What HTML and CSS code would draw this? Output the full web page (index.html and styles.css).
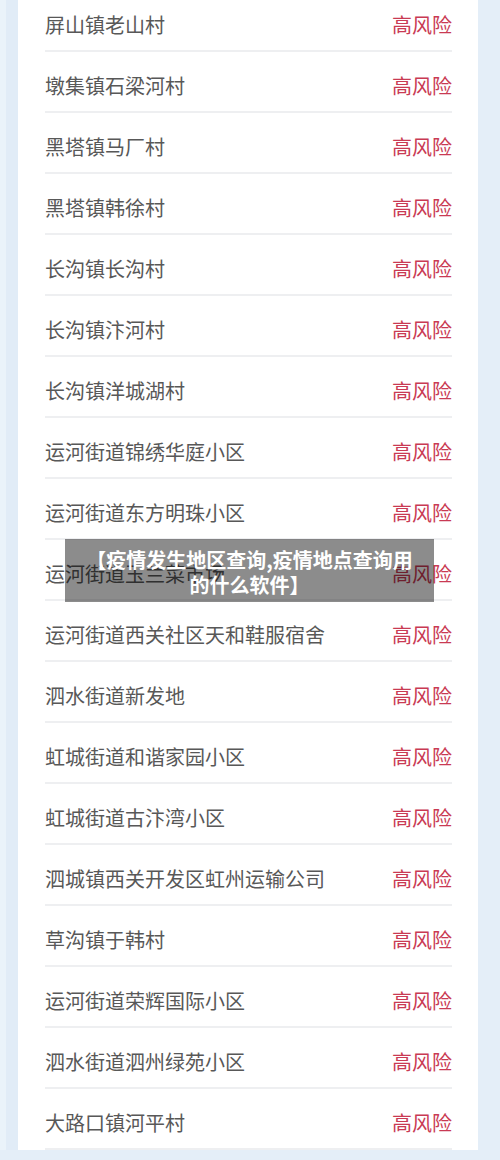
FILE: index.html
```html
<!DOCTYPE html>
<html lang="zh-CN">
<head>
    <meta charset="utf-8" />
    <title>疫情发生地区查询</title>
<link rel="stylesheet" href="styles.css">
</head>
<body>
  <div class="page">
    <div class="card">
      <ul class="risk-list">
        <li class="row"><span class="place">屏山镇老山村</span><span class="level">高风险</span></li>
        <li class="row"><span class="place">墩集镇石梁河村</span><span class="level">高风险</span></li>
        <li class="row"><span class="place">黑塔镇马厂村</span><span class="level">高风险</span></li>
        <li class="row"><span class="place">黑塔镇韩徐村</span><span class="level">高风险</span></li>
        <li class="row"><span class="place">长沟镇长沟村</span><span class="level">高风险</span></li>
        <li class="row"><span class="place">长沟镇汴河村</span><span class="level">高风险</span></li>
        <li class="row"><span class="place">长沟镇洋城湖村</span><span class="level">高风险</span></li>
        <li class="row"><span class="place">运河街道锦绣华庭小区</span><span class="level">高风险</span></li>
        <li class="row"><span class="place">运河街道东方明珠小区</span><span class="level">高风险</span></li>
        <li class="row"><span class="place">运河街道玉兰菜市场</span><span class="level">高风险</span></li>
        <li class="row"><span class="place">运河街道西关社区天和鞋服宿舍</span><span class="level">高风险</span></li>
        <li class="row"><span class="place">泗水街道新发地</span><span class="level">高风险</span></li>
        <li class="row"><span class="place">虹城街道和谐家园小区</span><span class="level">高风险</span></li>
        <li class="row"><span class="place">虹城街道古汴湾小区</span><span class="level">高风险</span></li>
        <li class="row"><span class="place">泗城镇西关开发区虹州运输公司</span><span class="level">高风险</span></li>
        <li class="row"><span class="place">草沟镇于韩村</span><span class="level">高风险</span></li>
        <li class="row"><span class="place">运河街道荣辉国际小区</span><span class="level">高风险</span></li>
        <li class="row"><span class="place">泗水街道泗州绿苑小区</span><span class="level">高风险</span></li>
        <li class="row"><span class="place">大路口镇河平村</span><span class="level">高风险</span></li>
      </ul>
    </div>
    <div class="title-banner">
      <span class="title-line">【疫情发生地区查询,疫情地点查询用</span>
      <span class="title-line">的什么软件】</span>
    </div>
  </div>
</body>
</html>
```

FILE: styles.css
```css
html, body {
  margin: 0;
  padding: 0;
}
body {
  background: #e4eef8;
  font-family: "Noto Sans CJK SC", "Noto Sans", sans-serif;
  height: 1160px;
  overflow: hidden;
}
.page {
  position: relative;
  padding: 0 22px 0 18px;
  background: linear-gradient(to right, #eaf3fa 0, #eaf3fa 6px, #e1ecf7 6px, #e1ecf7 18px, transparent 18px);
}
.card {
  background: #fff;
  padding: 0 26px 0 27px;
}
.risk-list {
  list-style: none;
  margin: -9px 0 0 0;
  padding: 0;
}
.row {
  display: flex;
  justify-content: space-between;
  align-items: center;
  padding: 20px 0 11px 0;
  font-size: 20px;
  line-height: 28px;
  border-bottom: 2px solid #eeeff1;
}
.place {
  color: #585858;
}
.level {
  color: #c93a53;
}
/* title overlay */
.title-banner {
  position: absolute;
  top: 548px;
  left: 65px;
  width: 369px;
  height: 63px;
  box-sizing: border-box;
  padding: 8px 0 0 0;
  background: rgba(0, 0, 0, 0.45);
  color: #fff;
  font-weight: bold;
  font-size: 20px;
  line-height: 25px;
  text-align: center;
  white-space: nowrap;
}
.title-line {
  display: block;
}
```
